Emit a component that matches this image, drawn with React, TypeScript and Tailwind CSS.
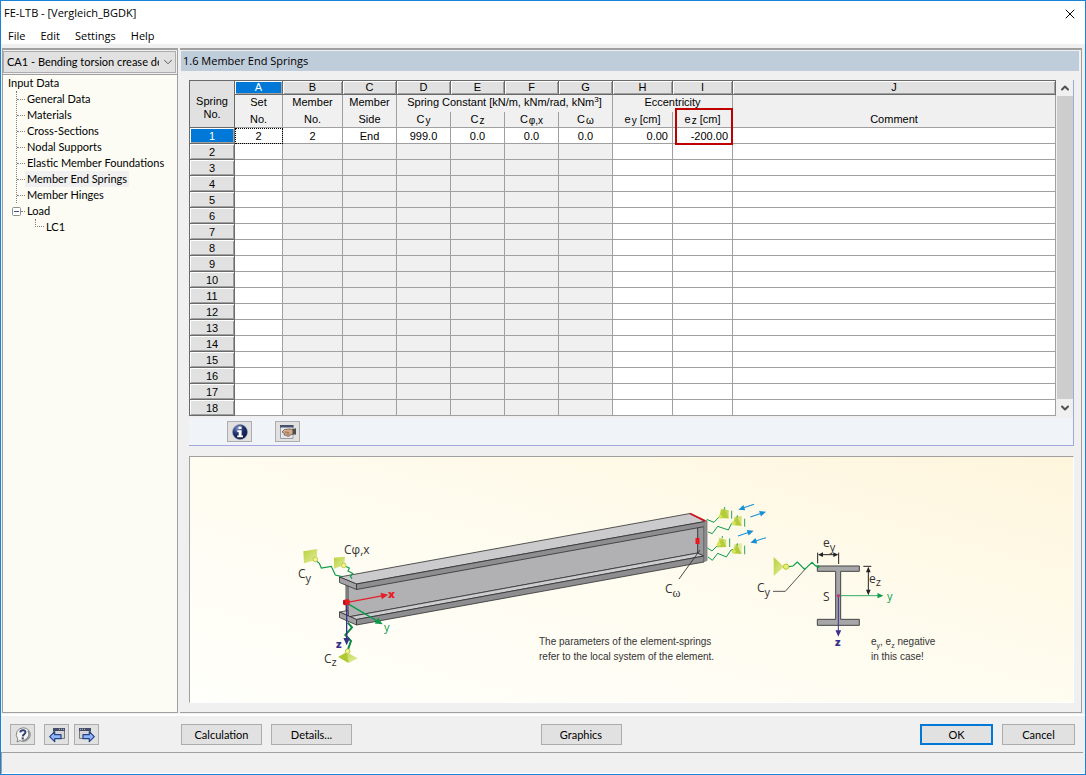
import React from 'react';
import { ChevronDown, ChevronUp, X } from 'lucide-react';

const treeItems = [
  'General Data',
  'Materials',
  'Cross-Sections',
  'Nodal Supports',
  'Elastic Member Foundations',
  'Member End Springs',
  'Member Hinges',
];

const letters = ['A', 'B', 'C', 'D', 'E', 'F', 'G', 'H', 'I', 'J'];
const firstRow = ['2', '2', 'End', '999.0', '0.0', '0.0', '0.0', '0.00', '-200.00', ''];
const rowNumbers = Array.from({ length: 18 }, (_, i) => i + 1);

const button =
  'flex h-[21px] items-center justify-center border border-[#adadad] bg-[#e1e1e1] font-[Lato,sans-serif] text-[11px] leading-4';
const raised = 'border-r border-b border-[#696969] bg-[#e1e1e1] p-0 font-normal';
const bevel = 'shadow-[inset_1px_1px_0_#fff,inset_-1px_-1px_0_#a0a0a0]';
const head = 'border-r border-[#a0a0a0] bg-[#f0f0f0] p-0 align-top font-normal whitespace-nowrap';
const index = 'bottom-[-1px] ml-px text-[10px] leading-none';

function TitleBar() {
  return (
    <header className="bg-white font-['Open_Sans',sans-serif] text-[11px]">
      <div className="flex h-[25px] items-center justify-between pl-[3px]">
        <h1>FE-LTB - [Vergleich_BGDK]</h1>
        <button type="button" aria-label="Close" className="mr-[3px] flex h-5 w-6 items-center justify-center">
          <X className="h-4 w-4" strokeWidth={1.5} />
        </button>
      </div>
      <nav className="flex h-[18px] items-center gap-[15px] pt-[2px] pl-[7px]">
        <button type="button">File</button>
        <button type="button">Edit</button>
        <button type="button">Settings</button>
        <button type="button">Help</button>
      </nav>
    </header>
  );
}

function Sidebar() {
  return (
    <aside className="flex w-[176px] shrink-0 flex-col border-t-2 border-r border-l border-[#a0a0a0] font-[Lato,sans-serif] text-[11px]">
      <div className="relative mt-px mr-px mb-px h-[22px]">
        <select
          aria-label="Design case"
          className="h-full w-full appearance-none overflow-hidden border border-[#adadad] bg-[#e1e1e1] pr-4 pl-[3px] text-clip whitespace-nowrap"
        >
          <option>CA1 - Bending torsion crease design</option>
        </select>
        <ChevronDown className="pointer-events-none absolute top-1 right-px h-[14px] w-[14px] text-[#444]" strokeWidth={1.5} />
      </div>
      <ul className="flex-1 border-t border-b border-[#a0a0a0] bg-[#fcfcf4] leading-4">
        <li>
          <span className="pl-[5px]">Input Data</span>
          <ul className="ml-[13px] border-l border-dotted border-[#808080]">
            {treeItems.map((item) => (
              <li key={item} className="flex h-4 items-center">
                <span className="w-2 border-t border-dotted border-[#808080]" />
                <a
                  href="#"
                  className={item === 'Member End Springs' ? 'bg-[#f0f0f0] px-[2px]' : 'px-[2px]'}
                >
                  {item}
                </a>
              </li>
            ))}
          </ul>
          <div className="flex h-4 items-center pl-[9px]">
            <svg viewBox="0 0 9 9" className="h-[9px] w-[9px]">
              <rect x=".5" y=".5" width="8" height="8" rx="1" fill="#fff" stroke="#8f8f8f" />
              <path d="M2 4.5h5" stroke="#3a4f9a" />
            </svg>
            <span className="w-1 border-t border-dotted border-[#808080]" />
            <a href="#" className="px-[2px]">Load</a>
          </div>
          <div className="flex h-4 pl-[32px]">
            <span className="h-2 w-[9px] border-b border-l border-dotted border-[#808080]" />
            <a href="#" className="px-[2px]">LC1</a>
          </div>
        </li>
      </ul>
    </aside>
  );
}

function cellClass(row: number, col: number) {
  const readOnly = row > 1 && col >= 1 && col <= 6;
  const numeric = col === 7 || col === 8;
  return [
    'border-r border-b border-[#a0a0a0] p-0 whitespace-nowrap',
    readOnly ? 'bg-[#f0f0f0]' : 'bg-white',
    numeric ? 'pr-1 text-right' : 'text-center',
    row === 1 && col === 0 ? 'outline-1 -outline-offset-1 outline-dotted outline-black' : '',
  ].join(' ');
}

function SpringTable() {
  return (
    <table className="min-w-0 flex-1 table-fixed border-separate border-spacing-0 border-t border-l border-[#696969] font-['Liberation_Sans',sans-serif] text-[11px] leading-[14px]">
      <colgroup>
        <col className="w-[45px]" />
        <col className="w-[48px]" />
        <col className="w-[60px]" />
        <col className="w-[54px]" />
        <col className="w-[54px]" />
        <col className="w-[54px]" />
        <col className="w-[54px]" />
        <col className="w-[54px]" />
        <col className="w-[60px]" />
        <col className="w-[60px]" />
        <col />
      </colgroup>
      <thead>
        <tr className="h-[14px] leading-[13px]">
          <th rowSpan={3} className={raised}>
            <div className="pt-2">Spring<br />No.</div>
          </th>
          {letters.map((letter) => (
            <th
              key={letter}
              scope="col"
              className={letter === 'A' ? `${raised} bg-[#0078d7]! text-white ${bevel}` : `${raised} ${bevel}`}
            >
              {letter}
            </th>
          ))}
        </tr>
        <tr className="h-[17px]">
          <th className={head}>Set</th>
          <th className={head}>Member</th>
          <th className={head}>Member</th>
          <th colSpan={4} className={head}>
            Spring Constant [kN/m, kNm/rad, kNm<sup className="text-[8px] leading-none">3</sup>]
          </th>
          <th colSpan={2} className={head}>Eccentricity</th>
          <th className={head} />
        </tr>
        <tr className="h-4">
          <th className={`${head} border-b`}>No.</th>
          <th className={`${head} border-b`}>No.</th>
          <th className={`${head} border-b`}>Side</th>
          <th className={`${head} border-b`}>C<sub className={index}>y</sub></th>
          <th className={`${head} border-b`}>C<sub className={index}>z</sub></th>
          <th className={`${head} border-b`}>C<sub className={index}>φ,x</sub></th>
          <th className={`${head} border-b`}>C<sub className={index}>ω</sub></th>
          <th className={`${head} border-b`}>e<sub className={index}>y</sub> [cm]</th>
          <th className={`${head} relative border-b`}>
            e<sub className={index}>z</sub> [cm]
            <span className="absolute -top-1 -right-px h-[37px] w-[58px] border-2 border-[#c00000]" />
          </th>
          <th className={`${head} border-b`}>Comment</th>
        </tr>
      </thead>
      <tbody>
        {rowNumbers.map((row) => (
          <tr key={row} className="h-4">
            <th
              scope="row"
              className={row === 1 ? `${raised} bg-[#0078d7]! text-white ${bevel}` : `${raised} ${bevel}`}
            >
              {row}
            </th>
            {letters.map((letter, col) => (
              <td key={letter} className={cellClass(row, col)}>
                {row === 1 ? firstRow[col] : ''}
              </td>
            ))}
          </tr>
        ))}
      </tbody>
    </table>
  );
}

function ScrollBar() {
  return (
    <div className="ml-px flex w-4 flex-col">
      <button type="button" aria-label="Scroll up" className="flex h-4 items-center justify-center">
        <ChevronUp className="h-3 w-3 text-[#505050]" strokeWidth={4} />
      </button>
      <div className="flex-1 bg-[#cdcdcd]" />
      <button type="button" aria-label="Scroll down" className="flex h-[17px] items-center justify-center">
        <ChevronDown className="h-3 w-3 text-[#505050]" strokeWidth={4} />
      </button>
    </div>
  );
}

function InfoIcon() {
  return (
    <svg viewBox="0 0 16 16" className="h-4 w-4">
      <defs>
        <radialGradient id="info" cx=".35" cy=".25" r=".8">
          <stop offset="0" stopColor="#7c90cc" />
          <stop offset=".5" stopColor="#1f2f6b" />
          <stop offset="1" stopColor="#0b1440" />
        </radialGradient>
      </defs>
      <circle cx="8" cy="8" r="7.5" fill="url(#info)" stroke="#8c93a8" strokeWidth=".6" />
      <path d="M6.5 2.5h3v2.4h-3zM5.3 6.2h4.3v5.2h1.4v1.9H5.2v-1.9h1.5V8.1H5.3z" fill="#fff" />
    </svg>
  );
}

function HandIcon() {
  return (
    <svg viewBox="0 0 16 14" className="h-[14px] w-4">
      <path d="M.5.5h12.500v13H.5z" fill="#e4e8ec" stroke="#9a9ea4" />
      <path d="M0 0h13.500v2.500H0z" fill="#46536b" />
      <path d="M2 7l2.500-2.500L9 4l5 .5v4.700l-3 .4-2 1.600H7.200l-1.200-1-2-.2.500-1.600z" fill="#d3ab8a" stroke="#735746" strokeWidth=".8" />
      <path d="M5 7l4 .5M6.500 9l3 .2" stroke="#735746" strokeWidth=".7" />
      <path d="M12.500 4.200l3.500-1v6.500l-3.500-.7z" fill="#4d4d4d" />
    </svg>
  );
}

function HelpIcon() {
  return (
    <svg viewBox="0 0 16 16" className="h-4 w-4">
      <path d="M8 .8a7 6.8 0 1 1-3 12.800L2 15l.8-3A6.900 6.900 0 0 1 8 .8z" fill="#f5f5f5" stroke="#858585" />
      <path d="M13 3.500a6.500 6.500 0 0 1-5.500 10" fill="none" stroke="#8c8c8c" strokeWidth="1.600" />
      <path d="M5.300 5.400C5.500 2.600 10.700 2.500 10.400 5.500 10.200 7.300 8 7.200 7.800 9.300" fill="none" stroke="#2f3f73" strokeWidth="2" />
      <path d="M6.700 10.400h2v2h-2z" fill="#2f3f73" />
    </svg>
  );
}

function TableArrowIcon({ forward }: { forward?: boolean }) {
  return (
    <svg viewBox="0 0 16 16" className="h-4 w-4">
      <g transform={forward ? 'translate(16 0) scale(-1 1)' : undefined}>
        <path d="M4.500 1.500h11v10h-11z" fill="#d4d4d4" stroke="#777" />
        <path d="M4 1h12v3H4z" fill="#454d66" />
        <path d="M10 2.300h1M12 2.300h1M14 2.300h1" stroke="#dfe5f5" strokeWidth=".8" />
        <path d="M.7 9.700l5-5v3h6.300v4H5.700v3z" fill="#8fb6f8" stroke="#24418c" strokeWidth="1.200" strokeLinejoin="round" />
      </g>
    </svg>
  );
}

function Arrow({ x1, y1, x2, y2, color, width = 2 }: { x1: number; y1: number; x2: number; y2: number; color: string; width?: number }) {
  const angle = (Math.atan2(y2 - y1, x2 - x1) * 180) / Math.PI;
  const length = Math.hypot(x2 - x1, y2 - y1);
  const tip = 10 + width * 3;
  return (
    <g transform={`translate(${x1} ${y1}) rotate(${angle})`}>
      <path d={`M0 0H${length - tip + 2}`} stroke={color} strokeWidth={width} />
      <path d={`M${length} 0l${-tip} ${-tip * 0.45}v${tip * 0.9}z`} fill={color} />
    </g>
  );
}

// member with its end springs, plus the section view of the eccentricities
function SpringDrawing() {
  return (
    <svg
      viewBox="190 457 883 245"
      preserveAspectRatio="xMinYMin meet"
      className="h-[245px] w-full font-['Open_Sans',sans-serif]"
      role="img"
      aria-label="Member end springs"
    >
      <defs>
        <linearGradient id="support" x1="0" y1="0" x2="1" y2="1">
          <stop offset="0" stopColor="#b9d03a" />
          <stop offset="1" stopColor="#e4eea4" />
        </linearGradient>
      </defs>

      <g stroke="#2e2e2e" strokeWidth=".8" strokeLinejoin="round">
        <path d="M346 584l2-2 350-55v26l-350 64h-2z" fill="#b1b1b3" />
        <path d="M348 586v30" />
        <path d="M339.500 612l8.500-1.500v6.500L697.700 553l6.300 3L356.500 619.500z" fill="#cdcdcf" />
        <path d="M356.500 619.500L704 556v6L356.500 625z" fill="#8e8e91" />
        <path d="M339.500 612l17 7.500v5.500l-17-7.500z" fill="#a3a3a6" />
        <path d="M697.700 526v27l6.300 3v-31z" fill="#98989b" />
        <path d="M339.500 577L690 513.500l15 8L356.500 584z" fill="#cbcbcd" />
        <path d="M356.500 584L705 521.500v5L356.500 589.500z" fill="#8e8e91" />
        <path d="M339.500 577l17 7v5.500l-17-7z" fill="#a3a3a6" />
        <path d="M704 521.500l3-1v40l-3 1z" fill="#8e8e91" stroke="#777" />
      </g>
      <path d="M690 513.500l15.500 7.500" stroke="#d4111b" strokeWidth="1.800" />
      <path d="M695.500 538h4v6h-4z" fill="#f0141e" />
      <path d="M700 550l-21 29" stroke="#333" strokeWidth=".9" />

      <g transform="translate(280 520) scale(.33333)" fill="none">
        <path d="M108 122l10 8 6 14 30-5 12 26 20 5" stroke="#0a9b4a" strokeWidth="3.500" />
        <path d="M194 138l14 6-4 9 14 7-7 8 5 8" stroke="#0a9b4a" strokeWidth="3.500" />
        <path d="M203 308l13 14-20 23 17 18-9 25" stroke="#0a8a43" strokeWidth="6" />
        <path d="M70 94l42-7-2 33-38 10z" fill="url(#support)" />
        <path d="M162 113l33-3-2 25-31 11z" fill="url(#support)" />
        <path d="M175 411l25-14 33 18-27 14z" fill="url(#support)" />
        <path d="M200 397l6 32-31-18z" fill="#afc935" />
        <circle cx="106" cy="118" r="7" fill="#f2f29c" stroke="#bccb3c" strokeWidth="3" />
        <circle cx="191" cy="136" r="7" fill="#f2f29c" stroke="#bccb3c" strokeWidth="3" />
        <circle cx="203" cy="394" r="7" fill="#f2f29c" stroke="#bccb3c" strokeWidth="3" />
        <Arrow x1={202} y1={247} x2={325} y2={224} color="#e6202a" width={4} />
        <Arrow x1={202} y1={250} x2={308} y2={313} color="#0a9b4a" width={4} />
        <Arrow x1={200} y1={250} x2={200} y2={376} color="#39308c" width={4} />
        <path d="M190 240l14-3 5 4v13l-16 2-4-4z" fill="#e31b23" />
        <path d="M190 240l6 4v12l-7-4z" fill="#b40d14" />
      </g>

      <g transform="translate(640 490) scale(.33333)" fill="none">
        <path d="M200 88l22 9 15-16 15-4M204 126l13 5 16-22 32 11 10-20 16-2M202 174l14 9 21-21 12-3M204 201l13 10 16-21 26 11 14-21 12-3" stroke="#0a9b4a" strokeWidth="3" />
        <path d="M243 57l23 4v24l-29-1zM283 81l22-3v29l-27-2zM238 143l21 6v22l-28 1zM283 163l22-3v32l-28-2z" fill="url(#support)" />
        <path d="M252 55l14 30-29-1zM290 79l15 28-27-2zM246 145l13 26-28 1zM290 162l15 30-28-2z" fill="#b5cc3a" />
        <circle cx="241" cy="80" r="6" fill="#d9e45b" />
        <circle cx="281" cy="100" r="6" fill="#d9e45b" />
        <circle cx="236" cy="163" r="6" fill="#d9e45b" />
        <circle cx="281" cy="184" r="6" fill="#d9e45b" />
        <path d="M275 62v24M314 86v24M269 145v26M314 167v26M254 51v8M292 76v6M247 138v6M292 160v6" stroke="#27a55a" strokeWidth="3" />
        <Arrow x1={342} y1={43} x2={295} y2={59} color="#178fd6" width={3} />
        <Arrow x1={331} y1={81} x2={378} y2={65} color="#178fd6" width={3} />
        <Arrow x1={294} y1={138} x2={341} y2={122} color="#178fd6" width={3} />
        <Arrow x1={378} y1={143} x2={331} y2={158} color="#178fd6" width={3} />
      </g>

      <g transform="translate(740 520) scale(.33333)" fill="none">
        <path d="M101 111v57l31-28z" fill="url(#support)" />
        <circle cx="138" cy="140" r="8" fill="#e7ef72" stroke="#b6c637" strokeWidth="3" />
        <path d="M147 140l12-2 13-12 22 22 22-21 10 10 8 3" stroke="#0a9b4a" strokeWidth="3.500" />
        <path d="M99 214h37l58-65" stroke="#333" strokeWidth="2.500" />
        <path d="M232 138h126v16h-56v144h56v18H232v-18h55V154h-55z" fill="#a7a7aa" stroke="#444" strokeWidth="3" />
        <circle cx="234" cy="140" r="4" fill="#0a9b4a" />
        <path d="M233 98v32M296 98v34M245 104h40M370 139h24M385 150v66" stroke="#222" strokeWidth="3" />
        <path d="M234 104l15-7v14zM295 104l-15-7v14zM385 140l-7 17h14zM385 226l-7-17h14z" fill="#222" />
        <Arrow x1={296} y1={227} x2={430} y2={227} color="#0a9b4a" width={2.5} />
        <Arrow x1={295} y1={227} x2={295} y2={350} color="#39308c" width={3} />
        <circle cx="295" cy="227" r="5" fill="#c03a7a" />
      </g>

      <g fontSize="12" fill="#333">
        <text x="298" y="578">C<tspan dy="4" fontSize="11">y</tspan></text>
        <text x="344" y="554">Cφ,x</text>
        <text x="324" y="663">C<tspan dy="3" fontSize="11">z</tspan></text>
        <text x="665" y="593">C<tspan dy="4" fontSize="12" fontFamily="Liberation Serif">ω</tspan></text>
        <text x="757" y="592">C<tspan dy="4" fontSize="11">y</tspan></text>
        <text x="823" y="547">e<tspan dy="4" fontSize="11">y</tspan></text>
        <text x="869" y="583">e<tspan dy="3" fontSize="11">z</tspan></text>
        <text x="823" y="601">S</text>
        <text x="388" y="598" fontWeight="800" fontSize="11" fill="#e6202a">x</text>
        <text x="384" y="631" fontSize="11" fill="#0a9b4a">y</text>
        <text x="887" y="600" fontSize="11" fill="#0a9b4a">y</text>
        <text x="336" y="648" fontWeight="800" fontSize="11" fill="#39308c">z</text>
        <text x="835" y="646" fontWeight="800" fontSize="11" fill="#39308c">z</text>
      </g>
      <g fontSize="10" fill="#333" fontFamily="Liberation Sans">
        <text x="539" y="645">The parameters of the element-springs</text>
        <text x="539" y="660">refer to the local system of the element.</text>
        <text x="871" y="645">
          e<tspan dy="3" fontSize="7">y</tspan><tspan dy="-3">, e</tspan><tspan dy="3" fontSize="7">z</tspan><tspan dy="-3"> negative</tspan>
        </text>
        <text x="871" y="660">in this case!</text>
      </g>
    </svg>
  );
}

function Workspace() {
  return (
    <main className="mr-[3px] flex min-w-0 flex-1 flex-col border-t-2 border-r border-b border-[#a0a0a0] pt-px">
      <h2 className="mr-[2px] ml-px h-5 bg-[#bfccda] pl-[2px] font-['Open_Sans',sans-serif] text-[11px] leading-5">
        1.6 Member End Springs
      </h2>
      <section className="mt-[9px] mr-[7px] ml-[9px] border-r border-b border-[#a6a6e0]">
        <div className="flex">
          <SpringTable />
          <ScrollBar />
        </div>
        <div className="mt-[2px] flex h-[27px] gap-[23px] bg-[#f0f4f9] pt-[3px] pl-[38px]">
          <button type="button" aria-label="Info" className={`${button} w-[25px]`}>
            <InfoIcon />
          </button>
          <button type="button" aria-label="Pick in model" className={`${button} w-[25px]`}>
            <HandIcon />
          </button>
        </div>
      </section>
      <section className="mt-[10px] mr-[7px] mb-[9px] ml-[9px] flex-1 border border-t-[#a0a0a0] border-r-white border-b-white border-l-[#a0a0a0] bg-linear-to-tr from-[#fffffb] via-[#fffcf0] to-[#fef5dc]">
        <SpringDrawing />
      </section>
    </main>
  );
}

function Footer() {
  return (
    <footer className="mt-px flex h-[38px] items-center border-t-2 border-white pt-px pr-[10px] pl-[9px]">
      <div className="flex w-[171px] gap-[5px]">
        <button type="button" aria-label="Help" className={`${button} mr-1 w-[25px]`}>
          <HelpIcon />
        </button>
        <button type="button" aria-label="Previous table" className={`${button} w-[25px]`}>
          <TableArrowIcon />
        </button>
        <button type="button" aria-label="Next table" className={`${button} w-[25px]`}>
          <TableArrowIcon forward />
        </button>
      </div>
      <div className="flex gap-[9px]">
        <button type="button" className={`${button} w-[81px]`}>Calculation</button>
        <button type="button" className={`${button} w-[81px]`}>Details...</button>
      </div>
      <div className="flex flex-1 justify-center pr-[110px]">
        <button type="button" className={`${button} w-[81px]`}>Graphics</button>
      </div>
      <div className="flex gap-[9px]">
        <button type="button" className={`${button} w-[73px] border-2 border-[#0078d7]!`}>OK</button>
        <button type="button" className={`${button} w-[73px]`}>Cancel</button>
      </div>
    </footer>
  );
}

export default function App() {
  return (
    <div className="flex min-h-screen flex-col border border-[#1883d7] bg-[#f0f0f0] text-black">
      <TitleBar />
      <div className="mt-1 flex flex-1 gap-[2px] pl-px">
        <Sidebar />
        <Workspace />
      </div>
      <Footer />
      <div className="mr-[2px] h-[22px] border-t border-b border-l border-t-[#a0a0a0] border-b-white border-l-[#a0a0a0]" />
    </div>
  );
}
